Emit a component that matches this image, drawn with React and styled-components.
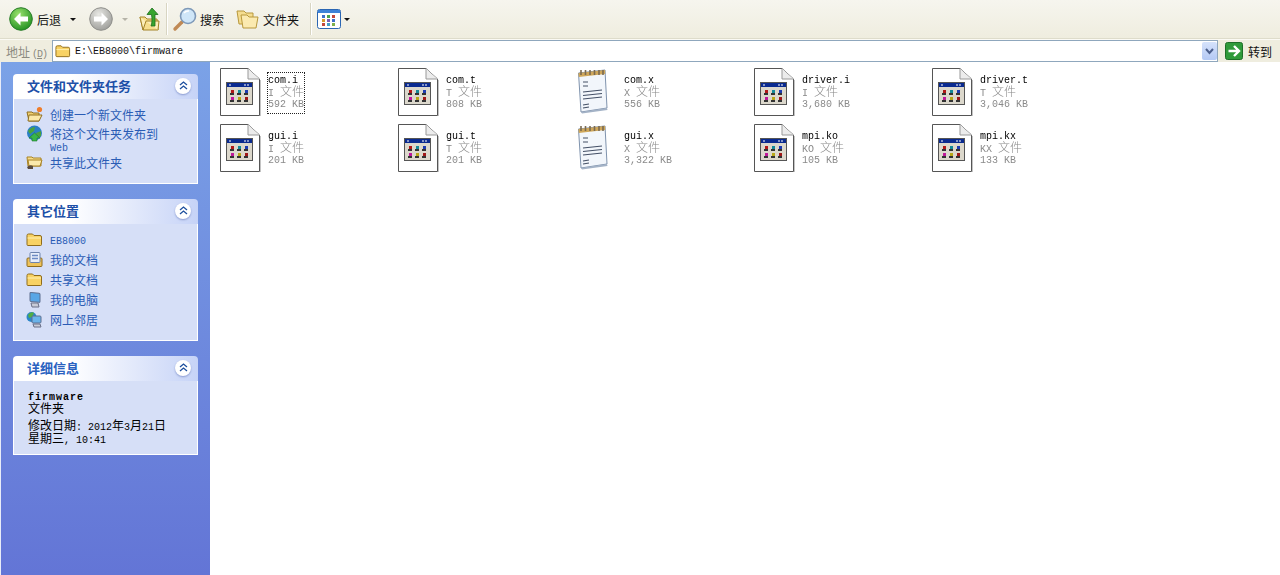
import React from "react";
import styled, { createGlobalStyle } from "styled-components";

const CJK = '"Noto Sans CJK SC", "Liberation Sans", sans-serif';
const MONO = '"Liberation Mono", monospace';

const GlobalStyle = createGlobalStyle`
  html, body { margin: 0; padding: 0; background: #fff; }
  body { font-family: ${CJK}; font-size: 12px; overflow: hidden; }
`;

const Window = styled.div`
  width: 1280px;
  height: 575px;
  display: flex;
  flex-direction: column;
  overflow: hidden;
`;

/* ---------- toolbar ---------- */
const Toolbar = styled.div`
  height: 38px;
  flex: none;
  display: flex;
  align-items: center;
  padding-left: 9px;
  background: linear-gradient(#f6f5ee, #efeddf);
  border-bottom: 1px solid #dedccb;
  box-sizing: content-box;
`;
const ToolItem = styled.div`
  display: flex;
  align-items: center;
  gap: ${(p) => p.$gap ?? 4}px;
  margin-right: ${(p) => p.$mr ?? 0}px;
  color: #111;
  font-size: 12px;
  white-space: nowrap;
`;
const Divider = styled.div`
  width: 1px;
  height: 32px;
  background: #d8d5c2;
  border-right: 1px solid #fff;
  margin-right: ${(p) => p.$mr ?? 6}px;
`;
const Caret = styled.span`
  width: 0;
  height: 0;
  border: 3px solid transparent;
  border-top: 3px solid ${(p) => (p.$off ? "#b5b3a8" : "#111")};
  border-bottom: 0;
  margin-left: ${(p) => p.$ml ?? 0}px;
`;

/* ---------- address bar ---------- */
const AddressBar = styled.div`
  height: 23px;
  flex: none;
  display: flex;
  align-items: center;
  background: #efeddf;
  border-top: 1px solid #fbfaf4;
  box-sizing: border-box;
`;
const AddressLabel = styled.span`
  width: 52px;
  flex: none;
  padding-left: 6px;
  box-sizing: border-box;
  color: #8b8a80;
  font-size: 12px;
  white-space: nowrap;
`;
const AccessKey = styled.span`
  font-family: ${MONO};
  font-size: 10px;
  letter-spacing: -1px;
  margin-left: 2px;
  u { text-decoration: underline; }
`;
const AddressField = styled.div`
  flex: 1;
  height: 22px;
  display: flex;
  align-items: center;
  gap: 4px;
  padding-left: 2px;
  background: #fff;
  border: 1px solid #8fa7bd;
  box-sizing: border-box;
  position: relative;
  font-family: ${MONO};
  font-size: 10px;
  color: #111;
`;
const DropButton = styled.div`
  position: absolute;
  right: 0;
  top: 1px;
  width: 15px;
  height: 18px;
  border-radius: 2px;
  background: linear-gradient(#d5e2fb, #b4c9f4);
  display: flex;
  align-items: center;
  justify-content: center;
`;
const GoButton = styled.div`
  width: 62px;
  flex: none;
  display: flex;
  align-items: center;
  gap: 5px;
  padding-left: 7px;
  box-sizing: border-box;
  color: #111;
  font-size: 12px;
`;

/* ---------- body ---------- */
const Main = styled.div`
  flex: 1;
  min-height: 0;
  display: flex;
`;
const Sidebar = styled.aside`
  width: 210px;
  flex: none;
  padding: 12px 12px 0 13px;
  box-sizing: border-box;
  display: flex;
  flex-direction: column;
  gap: 15px;
  background: linear-gradient(#7ba2e7, #6375d6);
  border-left: 1px solid #e8ecf8;
`;
const Panel = styled.section`
  width: 185px;
  margin-left: -1px;
`;
const PanelHead = styled.div`
  height: 25px;
  box-sizing: border-box;
  display: flex;
  align-items: center;
  justify-content: space-between;
  padding: 0 7px 2px 14px;
  border-radius: 4px 4px 0 0;
  background: linear-gradient(90deg, #ffffff 0%, #ffffff 30%, #c6d3f7 100%);
  color: ${(p) => p.$color ?? "#1d50a8"};
  font-size: 13px;
  font-weight: 700;
`;
const Chevron = styled.span`
  width: 16px;
  height: 16px;
  border-radius: 50%;
  background: #fff;
  box-shadow: 0 1px 2px #8a9bd0;
  display: flex;
  align-items: center;
  justify-content: center;
`;
const PanelBody = styled.div`
  height: ${(p) => p.$h}px;
  padding: ${(p) => p.$pt ?? 6}px 10px 0 ${(p) => p.$pl ?? 13}px;
  box-sizing: border-box;
  background: #d6dff7;
  border: 1px solid #fff;
  border-top: 0;
`;
const TaskRow = styled.div`
  display: flex;
  align-items: flex-start;
  gap: 7px;
  min-height: ${(p) => p.$h ?? 20}px;
  margin-left: -1px;
  color: #2a5cb5;
  font-size: 12px;
  line-height: 12px;
`;
const TaskIcon = styled.span`
  width: 17px;
  height: 17px;
  flex: none;
`;
const TaskText = styled.span`
  padding-top: ${(p) => p.$pt ?? 3}px;
`;
const Lat = styled.span`
  font-family: ${MONO};
  font-size: 10px;
  line-height: 10px;
`;
const DetailTitle = styled.div`
  color: #000;
  font-family: ${MONO};
  font-size: 10px;
  font-weight: 700;
  letter-spacing: 1px;
  line-height: 9px;
`;
const DetailLine = styled.div`
  color: #000;
  font-size: 12px;
  height: ${(p) => p.$h ?? 12}px;
  line-height: 12px;
  margin-top: ${(p) => p.$mt ?? 0}px;
  white-space: nowrap;
`;

/* ---------- file list ---------- */
const FileArea = styled.main`
  flex: 1;
  background: #fff;
  padding: 6px 0 0 9px;
  display: grid;
  grid-template-columns: repeat(5, 178px);
  grid-auto-rows: 56px;
  align-content: start;
`;
const Tile = styled.div`
  display: flex;
  align-items: flex-start;
`;
const TileIcon = styled.div`
  width: 48px;
  height: 48px;
  flex: none;
`;
const TileText = styled.div`
  margin-top: 4px;
  padding-bottom: 3px;
  border: 1px dotted ${(p) => (p.$focus ? "#222" : "transparent")};
  color: #8a8a8a;
  will-change: transform;
`;
const TileName = styled.div`
  color: #000;
  font-family: ${MONO};
  font-size: 10px;
  padding-top: 4px;
  line-height: 8px;
`;
const TileMeta = styled.div`
  font-family: ${MONO};
  font-size: 10px;
  line-height: 10px;
  margin-top: ${(p) => p.$mt ?? 1}px;
  white-space: nowrap;
`;
const Han = styled.span`
  font-family: ${CJK};
  font-size: 12px;
  font-weight: 300;
`;

/* ---------- drawings ---------- */
const FolderIcon = ({ size = 17 }) => (
  <svg width={size} height={size} viewBox="0 0 17 17">
    <path d="M1 4.5 Q1 3 2.5 3 H6.5 L8 4.5 H14 Q15.5 4.5 15.5 6 V13.5 Q15.5 14.5 14.5 14.5 H2 Q1 14.5 1 13.5 Z" fill="#f8d264" stroke="#8f6c1c" />
    <path d="M1.5 7 H15" stroke="#fff0b0" />
  </svg>
);
const BigCircleArrow = ({ back, off }) => (
  <svg width="24" height="24" viewBox="0 0 24 24">
    <defs>
      <radialGradient id={off ? "gOff" : "gOn"} cx="40%" cy="30%" r="75%">
        <stop offset="0" stopColor={off ? "#e8e8e4" : "#9be26e"} />
        <stop offset="1" stopColor={off ? "#9c9c98" : "#1f8f1f"} />
      </radialGradient>
    </defs>
    <circle cx="12" cy="12" r="11.3" fill={`url(#${off ? "gOff" : "gOn"})`} stroke={off ? "#8f8f8b" : "#2a7d2a"} />
    <path
      d={back ? "M11.5 5.5 L5 12 L11.5 18.5 V14.5 H19 V9.5 H11.5 Z" : "M12.5 5.5 L19 12 L12.5 18.5 V14.5 H5 V9.5 H12.5 Z"}
      fill="#fff"
    />
  </svg>
);
const UpIcon = () => (
  <svg width="24" height="26" viewBox="0 0 24 26">
    <path d="M3 11 H8 L10 13 H20 L21 24 H6 Z" fill="#f6df8e" stroke="#a48428" />
    <path d="M3 11 L6 24 L9 15 H22 L21 24" fill="#fbeeb8" stroke="#a48428" />
    <path d="M15 2 L21 8.5 H18 V20 H14 C15.5 16 15 12 14.5 8.5 H10 Z" fill="#37a52f" stroke="#1d6d1d" strokeWidth="0.8" />
  </svg>
);
const SearchIcon = () => (
  <svg width="26" height="26" viewBox="0 0 26 26">
    <path d="M10 16 L3 23" stroke="#c08a55" strokeWidth="3.4" strokeLinecap="round" />
    <circle cx="16" cy="10" r="7.5" fill="#cfe6f8" stroke="#7e99b8" strokeWidth="1.6" />
    <path d="M12 7 Q14 4.5 17 5" stroke="#fff" strokeWidth="1.5" fill="none" />
  </svg>
);
const FoldersIcon = () => (
  <svg width="24" height="22" viewBox="0 0 24 22">
    <path d="M1 3 H8 L10 5 H17 V16 H3 Z" fill="#f5dd90" stroke="#b8983c" />
    <path d="M5 7 H11 L13 9 H22 L20 20 H7 Z" fill="#fbeab0" stroke="#b8983c" />
  </svg>
);
const ViewsIcon = () => (
  <svg width="24" height="20" viewBox="0 0 24 20">
    <rect x="0.5" y="0.5" width="23" height="19" rx="2" fill="#fff" stroke="#2b66b3" />
    <rect x="1" y="1" width="22" height="3" fill="#3d82d6" />
    {[5, 10, 15].map((x, i) =>
      [6, 10, 14].map((y, j) => (
        <rect key={`${i}${j}`} x={x} y={y} width="3" height="3" fill={["#3f6fc9", "#d59a2c", "#c0473d", "#4aa24a", "#7a5bb0", "#3f9fc9", "#c0473d", "#3f6fc9", "#7fb04a"][i * 3 + j]} />
      ))
    )}
  </svg>
);
const GoIcon = () => (
  <svg width="18" height="18" viewBox="0 0 18 18">
    <rect x="0.5" y="0.5" width="17" height="17" rx="2" fill="#2f9a3a" stroke="#1e6e28" />
    <path d="M9 4 L14 9 L9 14 M13.5 9 H3.5" fill="none" stroke="#fff" strokeWidth="2.4" />
  </svg>
);
const ChevronUp = () => (
  <svg width="9" height="9" viewBox="0 0 9 9">
    <path d="M1 4 L4.5 1 L8 4 M1 8 L4.5 5 L8 8" fill="none" stroke="#1d4f9e" strokeWidth="1.3" />
  </svg>
);
const DropArrow = () => (
  <svg width="9" height="7" viewBox="0 0 9 7">
    <path d="M1 1 L4.5 5 L8 1" fill="none" stroke="#4c5f8c" strokeWidth="2" />
  </svg>
);
const NewFolderIcon = () => (
  <svg width="17" height="17" viewBox="0 0 17 17">
    <path d="M1 6 H6 L7 7 H13 V15 H3 Z" fill="#f0cf70" stroke="#8f6f20" />
    <path d="M3 9 H16 L13 15 H2 Z" fill="#fbe8a8" stroke="#8f6f20" />
    <circle cx="13.5" cy="3.5" r="2.6" fill="#ef7d2a" />
  </svg>
);
const PublishIcon = () => (
  <svg width="17" height="17" viewBox="0 0 17 17">
    <circle cx="8.5" cy="8" r="7.5" fill="#2a7fc4" />
    <path d="M2 6 Q5 2 9 2 L8 6 L4 9 Z M10 8 L15 6 L15 11 L11 13 Z" fill="#4aa23e" />
    <path d="M8.5 8 L14 13 H11 V16 H6 V13 H3 Z" fill="#39b54a" stroke="#1c7a2c" strokeWidth="0.6" />
  </svg>
);
const ShareIcon = () => (
  <svg width="17" height="17" viewBox="0 0 17 17">
    <path d="M1 3 H6 L7 4 H15 V12 H2 Z" fill="#f5dc8b" stroke="#a98324" />
    <path d="M2 6 H16 L14 12 H3 Z" fill="#fbe9ac" stroke="#a98324" />
    <path d="M1 13 Q4 10 7 12 L7 15 H2 Z" fill="#5a4a3c" />
  </svg>
);
const DocsIcon = () => (
  <svg width="17" height="17" viewBox="0 0 17 17">
    <path d="M1 8 Q1 7 2 7 H15 Q16 7 16 8 V14.5 Q16 15.5 15 15.5 H2 Q1 15.5 1 14.5 Z" fill="#eec25a" stroke="#8f6c1c" />
    <rect x="4" y="1.5" width="10" height="10" rx="1" fill="#e8eefa" stroke="#6c83ad" />
    <path d="M6 4.5 H12 M6 7.5 H12" stroke="#6d8bc4" strokeWidth="1.4" />
  </svg>
);
const ComputerIcon = () => (
  <svg width="17" height="17" viewBox="0 0 17 17">
    <rect x="4" y="1" width="10" height="9" rx="1" fill="#58a6e6" stroke="#5d6f90" transform="skewY(6)" />
    <path d="M5 12 H12 L13 16 H6 Z" fill="#c8ccd8" stroke="#6a7088" />
  </svg>
);
const NetworkIcon = () => (
  <svg width="17" height="17" viewBox="0 0 17 17">
    <circle cx="5.5" cy="6" r="5" fill="#2b86c9" />
    <path d="M2 4 Q5 0 8 2 L6 6 L3 7 Z" fill="#52ad43" />
    <rect x="6" y="5" width="9" height="7" rx="1" fill="#6ab3ea" stroke="#5d6f90" />
    <path d="M7 13 H14 L15 16 H8 Z" fill="#c8ccd8" stroke="#6a7088" />
  </svg>
);
const AppFileIcon = () => (
  <svg width="48" height="48" viewBox="0 0 48 48">
    <path d="M1.5 0.5 H29 L40.5 11 V47.5 H1.5 Z" fill="#fff" stroke="#555" />
    <path d="M29 0.5 V11 H40.5" fill="#ececec" stroke="#999" />
    <path d="M41.5 12 V48.5 H3" stroke="#c4c4c4" fill="none" />
    <rect x="7.5" y="14.5" width="26" height="22" fill="#dcd8cc" stroke="#555" />
    <rect x="8" y="15" width="25" height="4" fill="#0a2a8f" />
    <path d="M25 17 H27 M28 17 H30 M10 17 H12" stroke="#fff" />
    {[
      [12, 22, "#b01818"], [19, 22, "#138a98"], [26, 22, "#1d3bb0"],
      [12, 29, "#c0189a"], [19, 29, "#b8a818"], [26, 29, "#a01818"],
    ].map(([x, y, c]) => (
      <g key={`${x}${y}`}>
        <rect x={x} y={y} width="3" height="3" fill={c} />
        <rect x={x - 1} y={y + 3} width="4" height="2" fill="#333" />
      </g>
    ))}
  </svg>
);
const NotepadIcon = () => (
  <svg width="48" height="48" viewBox="0 0 48 48">
    <path d="M3.5 5 L30 2 L32 40 L6 44 Z" fill="#f2f6fb" stroke="#7f93ad" />
    <path d="M6 44 L32 40 L32.5 42 L7 45.5 Z" fill="#a3b2c6" />
    <path d="M3.5 5 L30 2 L30.2 6 L3.8 9 Z" fill="#cfa75a" />
    {[6, 10.5, 15, 19.5, 24, 28].map((x) => (
      <path key={x} d={`M${x} 7 V2`} stroke="#7a6a50" strokeWidth="1.6" />
    ))}
    <path d="M8 14 H13 M8 18 H13 M8 24 L27 22 M8 27.5 L27 25.5 M8 31 L27 29 M8 37 L14 36 M8 40 L14 39" stroke="#445066" strokeWidth="1.2" />
  </svg>
);

const files = [
  ["com.i", "I", "592", "app"],
  ["com.t", "T", "808", "app"],
  ["com.x", "X", "556", "note"],
  ["driver.i", "I", "3,680", "app"],
  ["driver.t", "T", "3,046", "app"],
  ["gui.i", "I", "201", "app"],
  ["gui.t", "T", "201", "app"],
  ["gui.x", "X", "3,322", "note"],
  ["mpi.ko", "KO", "105", "app"],
  ["mpi.kx", "KX", "133", "app"],
];

function App() {
  return (
    <Window>
      <GlobalStyle />
      <Toolbar>
        <ToolItem $mr={13}>
          <BigCircleArrow back />
          <span>后退</span>
          <Caret $ml={5} />
        </ToolItem>
        <ToolItem $mr={9}>
          <BigCircleArrow off />
          <Caret $off $ml={5} />
        </ToolItem>
        <ToolItem $mr={5}><UpIcon /></ToolItem>
        <Divider $mr={4} />
        <ToolItem $gap={2} $mr={12}><SearchIcon /><span>搜索</span></ToolItem>
        <ToolItem $gap={3} $mr={11}><FoldersIcon /><span>文件夹</span></ToolItem>
        <Divider $mr={5} />
        <ToolItem $gap={3}><ViewsIcon /><Caret /></ToolItem>
      </Toolbar>
      <AddressBar>
        <AddressLabel>地址<AccessKey>(<u>D</u>)</AccessKey></AddressLabel>
        <AddressField>
          <FolderIcon size={16} />
          <span>E:\EB8000\firmware</span>
          <DropButton><DropArrow /></DropButton>
        </AddressField>
        <GoButton><GoIcon /><span>转到</span></GoButton>
      </AddressBar>
      <Main>
        <Sidebar>
          <Panel>
            <PanelHead>文件和文件夹任务<Chevron><ChevronUp /></Chevron></PanelHead>
            <PanelBody $h={85} $pt={7}>
              <TaskRow $h={19}><TaskIcon><NewFolderIcon /></TaskIcon><TaskText>创建一个新文件夹</TaskText></TaskRow>
              <TaskRow $h={29}>
                <TaskIcon><PublishIcon /></TaskIcon>
                <TaskText>将这个文件夹发布到<br /><Lat>Web</Lat></TaskText>
              </TaskRow>
              <TaskRow><TaskIcon><ShareIcon /></TaskIcon><TaskText>共享此文件夹</TaskText></TaskRow>
            </PanelBody>
          </Panel>
          <Panel>
            <PanelHead>其它位置<Chevron><ChevronUp /></Chevron></PanelHead>
            <PanelBody $h={117} $pt={7}>
              <TaskRow><TaskIcon><FolderIcon /></TaskIcon><TaskText $pt={2}><Lat>EB8000</Lat></TaskText></TaskRow>
              <TaskRow><TaskIcon><DocsIcon /></TaskIcon><TaskText>我的文档</TaskText></TaskRow>
              <TaskRow><TaskIcon><FolderIcon /></TaskIcon><TaskText>共享文档</TaskText></TaskRow>
              <TaskRow><TaskIcon><ComputerIcon /></TaskIcon><TaskText>我的电脑</TaskText></TaskRow>
              <TaskRow><TaskIcon><NetworkIcon /></TaskIcon><TaskText>网上邻居</TaskText></TaskRow>
            </PanelBody>
          </Panel>
          <Panel>
            <PanelHead $color="#2a62c0">详细信息<Chevron><ChevronUp /></Chevron></PanelHead>
            <PanelBody $h={74} $pt={12} $pl={14}>
              <DetailTitle>firmware</DetailTitle>
              <DetailLine>文件夹</DetailLine>
              <DetailLine $mt={5} $h={13}>修改日期<Lat>: 2012</Lat>年<Lat>3</Lat>月<Lat>21</Lat>日</DetailLine>
              <DetailLine>星期三<Lat>, 10:41</Lat></DetailLine>
            </PanelBody>
          </Panel>
        </Sidebar>
        <FileArea>
          {files.map(([name, type, size, kind], i) => (
            <Tile key={name}>
              <TileIcon>{kind === "app" ? <AppFileIcon /> : <NotepadIcon />}</TileIcon>
              <TileText $focus={i === 0}>
                <TileName>{name}</TileName>
                <TileMeta>{type} <Han>文件</Han></TileMeta>
                <TileMeta>{size} KB</TileMeta>
              </TileText>
            </Tile>
          ))}
        </FileArea>
      </Main>
    </Window>
  );
}

export default App;
